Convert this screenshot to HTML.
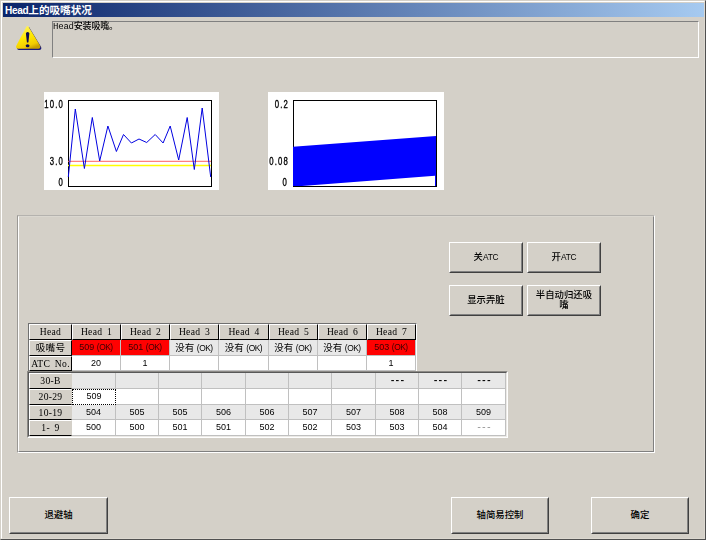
<!DOCTYPE html>
<html lang="zh-CN">
<head>
<meta charset="utf-8">
<title>Head上的吸嘴状况</title>
<style>
html,body{margin:0;padding:0;}
body{width:706px;height:540px;overflow:hidden;background:#d4d0c8;position:relative;
  font-family:"Liberation Sans","Noto Sans CJK SC",sans-serif;font-size:9px;color:#000;}
.abs{position:absolute;box-sizing:border-box;}
#win{left:0;top:0;width:706px;height:540px;border:1px solid #d4d0c8;border-right-color:#505050;border-bottom-color:#505050;}
#win2{left:1px;top:1px;width:704px;height:538px;border:1px solid #fff;border-right-color:#dcd8d0;border-bottom-color:#dcd8d0;}
#title{left:3px;top:3px;width:701px;height:14px;background:linear-gradient(to right,#0a246a 0%,#a6caf0 100%);
  color:#fff;font-weight:bold;font-size:10.6px;line-height:13px;padding:1px 0 0 2px;white-space:nowrap;letter-spacing:0;}
#msg{font-weight:500;left:52px;top:21px;width:647px;height:37px;border:1px solid #808080;border-right-color:#fff;border-bottom-color:#fff;
  font-family:"Liberation Mono","Noto Sans CJK SC",monospace;font-size:9px;line-height:11px;padding:0;white-space:nowrap;letter-spacing:-0.2px;}
.chart{background:#fff;}
.lbl{font-family:"Liberation Sans",sans-serif;font-size:10.3px;line-height:10px;text-align:right;white-space:nowrap;letter-spacing:1.6px;transform:scaleX(0.75);-webkit-text-stroke:0.35px #000;transform-origin:100% 50%;}
#panel{left:17px;top:215px;width:638px;height:238px;border:1px solid #b4b2ae;border-left-color:#9a9894;border-right-color:#fff;border-bottom-color:#fff;}
#panel2{left:18px;top:216px;width:636px;height:236px;border:1px solid #fff;border-top-color:#dad7d0;border-right-color:#808080;border-bottom-color:#808080;}
.btn{border:1px solid #fff;border-right-color:#404040;border-bottom-color:#404040;background:#d4d0c8;
  display:flex;align-items:center;justify-content:center;text-align:center;font-size:9.4px;line-height:10px;padding-bottom:2px;}
.btn::after{content:"";position:absolute;left:0;top:0;right:0;bottom:0;border:1px solid #d4d0c8;border-right-color:#808080;border-bottom-color:#808080;}
.cell{position:absolute;box-sizing:border-box;font-family:"Liberation Sans","Noto Sans CJK SC",sans-serif;font-size:9px;line-height:15px;text-align:center;white-space:nowrap;overflow:hidden;}
.hd{background:#d4d0c8;border:1px solid #fff;border-right-color:#000;border-bottom-color:#000;line-height:14px;font-family:"Liberation Serif","Noto Sans CJK SC",serif;font-size:9.6px;letter-spacing:0.3px;word-spacing:2px;}
.wc{background:#fff;border-right:1px solid #c0c0c0;border-bottom:1px solid #c0c0c0;}
.gc{background:#e8e8e8;border-right:1px solid #c0c0c0;border-bottom:1px solid #c0c0c0;}
.rc{background:#ff0000;color:#380000;border-right:1px solid #c0c0c0;border-bottom:1px solid #c0c0c0;}
.ds{font-family:"Liberation Mono",monospace;font-size:9.5px;font-weight:bold;letter-spacing:-0.9px;}
.dg{color:#808080;font-weight:normal;}
.la{font-size:8.4px;letter-spacing:-0.2px;}
.btn{font-weight:500;}
.h2{border-right-color:#d4d0c8;}
.ok{font-size:8.4px;letter-spacing:-0.45px;}
.gc .cj{font-size:9.5px;}
#root{position:absolute;left:0;top:0;width:706px;height:540px;opacity:0.999;}
</style>
</head>
<body>
<div id="root">
<div id="win" class="abs"></div>
<div id="win2" class="abs"></div>
<div id="title" class="abs"><span style="font-size:10.1px;letter-spacing:-0.35px">Head</span>上的吸嘴状况</div>

<svg class="abs" style="left:8px;top:18px" width="44" height="38" viewBox="8 18 44 38">
  <defs>
    <linearGradient id="yg" x1="0.2" y1="0" x2="0.6" y2="1">
      <stop offset="0" stop-color="#fff36a"/><stop offset="0.5" stop-color="#ffe800"/><stop offset="0.85" stop-color="#f2cc00"/><stop offset="1" stop-color="#c8a000"/>
    </linearGradient>
  </defs>
  <path d="M26.1 27.3 Q27.5 24.7 28.9 27.3 L40 45.6 Q41.2 48.6 38.2 48.8 L18.2 48.8 Q15.2 48.6 16.4 45.6 Z" fill="#18187c" transform="translate(1,1.1)"/>
  <path d="M26.1 27.3 Q27.5 24.7 28.9 27.3 L40 45.6 Q41.2 48.6 38.2 48.8 L18.2 48.8 Q15.2 48.6 16.4 45.6 Z" fill="url(#yg)"/>
  <path d="M25.9 33.2 Q27.6 30.8 29.4 33.2 L28.4 42.2 Q27.6 43 26.9 42.2 Z" fill="#0a0a50"/>
  <ellipse cx="27.6" cy="45.7" rx="1.9" ry="1.5" fill="#0a0a50"/>
</svg>

<div id="msg" class="abs">Head安装吸嘴。</div>

<!-- chart 1 -->
<div class="abs chart" style="left:44px;top:92px;width:175px;height:98px;"></div>
<div class="abs lbl" style="left:34.3px;top:100px;width:30px;">10.0</div>
<div class="abs lbl" style="left:34px;top:157px;width:30px;">3.0</div>
<div class="abs lbl" style="left:34px;top:178px;width:30px;">0</div>
<svg class="abs" style="left:44px;top:92px" width="175" height="98" viewBox="44 92 175 98">
  <rect x="68.5" y="100.5" width="143" height="86" fill="none" stroke="#000" stroke-width="1"/>
  <line x1="68" y1="161.3" x2="211" y2="161.3" stroke="#ff6060" stroke-width="1"/>
  <line x1="68" y1="165.5" x2="211" y2="165.5" stroke="#ffff00" stroke-width="1.3"/>
  <polyline fill="none" stroke="#0000e0" stroke-width="1" stroke-linejoin="miter"
   points="68.3,177 75.3,109 84.4,168.5 92.3,117.5 99.7,161 107.9,126 116.4,151.5 123.5,134.5 131.4,143 139,139 146.7,142.5 155.2,134.5 163.1,143 170.2,126 178.7,160 187.2,117.5 194.3,169.5 202.2,108 210.7,177"/>
</svg>

<!-- chart 2 -->
<div class="abs chart" style="left:268px;top:92px;width:176px;height:98px;"></div>
<div class="abs lbl" style="left:259px;top:100px;width:30px;">0.2</div>
<div class="abs lbl" style="left:258.5px;top:157px;width:30px;">0.08</div>
<div class="abs lbl" style="left:258.3px;top:178px;width:30px;">0</div>
<svg class="abs" style="left:268px;top:92px" width="176" height="98" viewBox="268 92 176 98">
  <rect x="293.5" y="100.5" width="143" height="86" fill="none" stroke="#000" stroke-width="1"/>
  <polygon fill="#0000ff" points="293,146.8 436,136 436,186 435,186 435,175.8 302,186 293,186"/>
</svg>

<div id="panel" class="abs"></div>
<div id="panel2" class="abs"></div>

<div class="abs btn" style="left:449px;top:242px;width:74px;height:31px;">关<span class="la">ATC</span></div>
<div class="abs btn" style="left:527px;top:242px;width:74px;height:31px;">开<span class="la">ATC</span></div>
<div class="abs btn" style="left:449px;top:285px;width:74px;height:31px;">显示弄脏</div>
<div class="abs btn" style="left:527px;top:285px;width:74px;height:31px;"><span>半自动归还吸<br>嘴</span></div>

<!-- table 1 -->
<div id="t1" class="abs" style="left:28px;top:323px;width:389px;height:48px;border:1px solid #707070;border-right:1px solid #fff;border-bottom:0;"></div>
<!-- table 2 -->
<div id="t2" class="abs" style="left:27px;top:371px;width:481px;height:67px;border:1px solid #8c8a86;border-right-color:#fff;border-bottom-color:#fff;"></div>
<div id="t2b" class="abs" style="left:28px;top:372px;width:479px;height:65px;border:1px solid #585858;border-right-color:#eceae6;border-bottom-color:#eceae6;"></div>
<div class="cell hd" style="left:29px;top:324px;width:43px;height:16px;">Head</div>
<div class="cell hd" style="left:72px;top:324px;width:49px;height:16px;">Head 1</div>
<div class="cell hd" style="left:121px;top:324px;width:49px;height:16px;">Head 2</div>
<div class="cell hd" style="left:170px;top:324px;width:49px;height:16px;">Head 3</div>
<div class="cell hd" style="left:219px;top:324px;width:50px;height:16px;">Head 4</div>
<div class="cell hd" style="left:269px;top:324px;width:49px;height:16px;">Head 5</div>
<div class="cell hd" style="left:318px;top:324px;width:49px;height:16px;">Head 6</div>
<div class="cell hd" style="left:367px;top:324px;width:49px;height:16px;">Head 7</div>
<div class="cell hd" style="left:29px;top:340px;width:43px;height:16px;">吸嘴号</div>
<div class="cell rc" style="left:72px;top:340px;width:49px;height:16px;">509 <span class="ok">(OK)</span></div>
<div class="cell rc" style="left:121px;top:340px;width:49px;height:16px;">501 <span class="ok">(OK)</span></div>
<div class="cell gc" style="left:170px;top:340px;width:49px;height:16px;"><span class="cj">没有</span> <span class="ok">(OK)</span></div>
<div class="cell gc" style="left:219px;top:340px;width:50px;height:16px;"><span class="cj">没有</span> <span class="ok">(OK)</span></div>
<div class="cell gc" style="left:269px;top:340px;width:49px;height:16px;"><span class="cj">没有</span> <span class="ok">(OK)</span></div>
<div class="cell gc" style="left:318px;top:340px;width:49px;height:16px;"><span class="cj">没有</span> <span class="ok">(OK)</span></div>
<div class="cell rc" style="left:367px;top:340px;width:49px;height:16px;">503 <span class="ok">(OK)</span></div>
<div class="cell hd" style="left:29px;top:356px;width:43px;height:15px;">ATC No.</div>
<div class="cell wc" style="left:72px;top:356px;width:49px;height:15px;">20</div>
<div class="cell wc" style="left:121px;top:356px;width:49px;height:15px;">1</div>
<div class="cell wc" style="left:170px;top:356px;width:49px;height:15px;"></div>
<div class="cell wc" style="left:219px;top:356px;width:50px;height:15px;"></div>
<div class="cell wc" style="left:269px;top:356px;width:49px;height:15px;"></div>
<div class="cell wc" style="left:318px;top:356px;width:49px;height:15px;"></div>
<div class="cell wc" style="left:367px;top:356px;width:49px;height:15px;">1</div>
<div class="cell hd h2" style="left:29px;top:373px;width:43px;height:16px;">30-B</div>
<div class="cell gc" style="left:72px;top:373px;width:44px;height:16px;"></div>
<div class="cell gc" style="left:116px;top:373px;width:43px;height:16px;"></div>
<div class="cell gc" style="left:159px;top:373px;width:43px;height:16px;"></div>
<div class="cell gc" style="left:202px;top:373px;width:44px;height:16px;"></div>
<div class="cell gc" style="left:246px;top:373px;width:43px;height:16px;"></div>
<div class="cell gc" style="left:289px;top:373px;width:43px;height:16px;"></div>
<div class="cell gc" style="left:332px;top:373px;width:44px;height:16px;"></div>
<div class="cell gc ds" style="left:376px;top:373px;width:43px;height:16px;">---</div>
<div class="cell gc ds" style="left:419px;top:373px;width:43px;height:16px;">---</div>
<div class="cell gc ds" style="left:462px;top:373px;width:44px;height:16px;">---</div>
<div class="cell hd h2" style="left:29px;top:389px;width:43px;height:16px;">20-29</div>
<div class="cell wc" style="left:72px;top:389px;width:44px;height:16px;border:1px dotted #000;line-height:13px;">509</div>
<div class="cell wc" style="left:116px;top:389px;width:43px;height:16px;"></div>
<div class="cell wc" style="left:159px;top:389px;width:43px;height:16px;"></div>
<div class="cell wc" style="left:202px;top:389px;width:44px;height:16px;"></div>
<div class="cell wc" style="left:246px;top:389px;width:43px;height:16px;"></div>
<div class="cell wc" style="left:289px;top:389px;width:43px;height:16px;"></div>
<div class="cell wc" style="left:332px;top:389px;width:44px;height:16px;"></div>
<div class="cell wc" style="left:376px;top:389px;width:43px;height:16px;"></div>
<div class="cell wc" style="left:419px;top:389px;width:43px;height:16px;"></div>
<div class="cell wc" style="left:462px;top:389px;width:44px;height:16px;"></div>
<div class="cell hd h2" style="left:29px;top:405px;width:43px;height:15px;">10-19</div>
<div class="cell gc" style="left:72px;top:405px;width:44px;height:15px;">504</div>
<div class="cell gc" style="left:116px;top:405px;width:43px;height:15px;">505</div>
<div class="cell gc" style="left:159px;top:405px;width:43px;height:15px;">505</div>
<div class="cell gc" style="left:202px;top:405px;width:44px;height:15px;">506</div>
<div class="cell gc" style="left:246px;top:405px;width:43px;height:15px;">506</div>
<div class="cell gc" style="left:289px;top:405px;width:43px;height:15px;">507</div>
<div class="cell gc" style="left:332px;top:405px;width:44px;height:15px;">507</div>
<div class="cell gc" style="left:376px;top:405px;width:43px;height:15px;">508</div>
<div class="cell gc" style="left:419px;top:405px;width:43px;height:15px;">508</div>
<div class="cell gc" style="left:462px;top:405px;width:44px;height:15px;">509</div>
<div class="cell hd h2" style="left:29px;top:420px;width:43px;height:16px;">1- 9</div>
<div class="cell wc" style="left:72px;top:420px;width:44px;height:16px;">500</div>
<div class="cell wc" style="left:116px;top:420px;width:43px;height:16px;">500</div>
<div class="cell wc" style="left:159px;top:420px;width:43px;height:16px;">501</div>
<div class="cell wc" style="left:202px;top:420px;width:44px;height:16px;">501</div>
<div class="cell wc" style="left:246px;top:420px;width:43px;height:16px;">502</div>
<div class="cell wc" style="left:289px;top:420px;width:43px;height:16px;">502</div>
<div class="cell wc" style="left:332px;top:420px;width:44px;height:16px;">503</div>
<div class="cell wc" style="left:376px;top:420px;width:43px;height:16px;">503</div>
<div class="cell wc" style="left:419px;top:420px;width:43px;height:16px;">504</div>
<div class="cell wc ds dg" style="left:462px;top:420px;width:44px;height:16px;">---</div>

<div class="abs btn" style="left:9px;top:497px;width:99px;height:37px;">退避轴</div>
<div class="abs btn" style="left:451px;top:497px;width:98px;height:37px;">轴简易控制</div>
<div class="abs btn" style="left:591px;top:497px;width:98px;height:37px;">确定</div>

</div>
</body>
</html>
